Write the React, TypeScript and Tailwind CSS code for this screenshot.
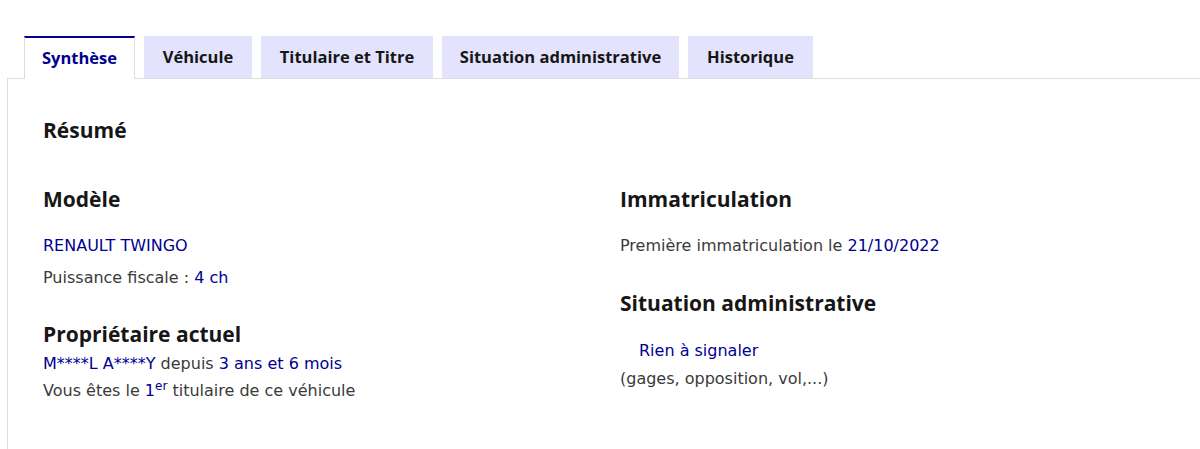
const tabs = [
  { label: 'Synthèse', width: 'w-[111px]', active: true },
  { label: 'Véhicule', width: 'w-[108px]', active: false },
  { label: 'Titulaire et Titre', width: 'w-[172px]', active: false },
  { label: 'Situation administrative', width: 'w-[237px]', active: false },
  { label: 'Historique', width: 'w-[125px]', active: false },
]

function Tabs() {
  return (
    <div className="relative z-10 flex h-[42px] items-start gap-[9px] pl-[24px] font-['Open_Sans',sans-serif]">
      {tabs.map((tab) => (
        <button
          key={tab.label}
          className={
            tab.active
              ? `${tab.width} flex h-[43px] items-center justify-center border-x border-t-2 border-x-[#dddddd] border-t-[#000091] bg-white pb-px text-[16.5px] font-bold text-[#000091]`
              : `${tab.width} flex h-[42px] items-center justify-center bg-[#e3e3fd] text-[16.5px] font-bold text-[#161616]`
          }
        >
          {tab.label}
        </button>
      ))}
    </div>
  )
}

const heading = "font-['Open_Sans',sans-serif] text-[21px] font-bold leading-[28px] text-[#161616]"

export default function App() {
  return (
    <div className="h-[449px] w-[1200px] overflow-hidden bg-white pt-9 font-['DejaVu_Sans',sans-serif] text-[#3a3a3a]">
      <Tabs />
      <div className="ml-[7px] h-[371px] border-l border-t border-[#dddddd] pl-[35px] pt-[37px]">
        <h2 className={heading}>Résumé</h2>

        <div className="mt-[41px] grid grid-cols-[577px_1fr] text-[16px]">
          <div>
            <h3 className={heading}>Modèle</h3>
            <p className="mt-[21px] leading-[24px] text-[#000091]">RENAULT TWINGO</p>
            <p className="mt-[8px] leading-[24px]">
              Puissance fiscale : <span className="text-[#000091]">4 ch</span>
            </p>
            <h3 className={`${heading} mt-[30px]`}>Propriétaire actuel</h3>
            <p className="mt-[2px] leading-[27px]">
              <span className="text-[#000091]">M****L A****Y</span> depuis{' '}
              <span className="text-[#000091]">3 ans et 6 mois</span>
            </p>
            <p className="leading-[27px]">
              Vous êtes le{' '}
              <span className="text-[#000091]">
                1<sup className="text-[12px]">er</sup>
              </span>{' '}
              titulaire de ce véhicule
            </p>
          </div>

          <div>
            <h3 className={heading}>Immatriculation</h3>
            <p className="mt-[21px] leading-[24px]">
              Première immatriculation le <span className="text-[#000091]">21/10/2022</span>
            </p>
            <h3 className={`${heading} mt-[31px]`}>Situation administrative</h3>
            <p className="mt-[22px] pl-[19px] leading-[24px] text-[#000091]">Rien à signaler</p>
            <p className="mt-[4px] leading-[24px]">(gages, opposition, vol,...)</p>
          </div>
        </div>
      </div>
    </div>
  )
}
